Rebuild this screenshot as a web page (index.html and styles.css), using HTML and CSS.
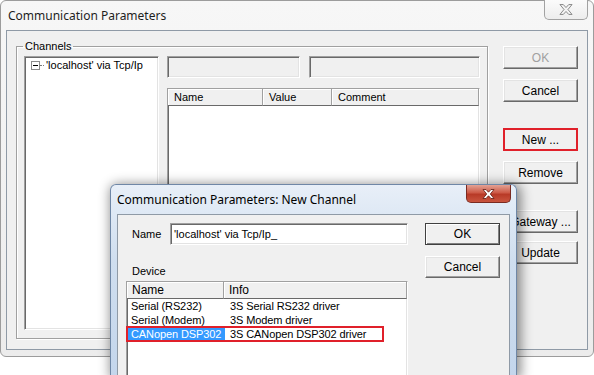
FILE: index.html
```html
<!DOCTYPE html>
<html lang="en">

<head>
    <meta charset="UTF-8">
    <meta name="viewport" content="width=device-width, initial-scale=1.0">
    <title>Communication Parameters</title>
    <link rel="stylesheet" href="styles.css">
</head>

<body>
    <!-- main window -->
    <div class="win main">
        <div class="titlebar">
            <span class="title">Communication Parameters</span>
            <span class="close idle">
                <svg width="14" height="11" viewBox="0 0 12 10">
                    <polygon points="0.5,0.5 3.5,0.5 6,3.2 8.5,0.5 11.5,0.5 7.8,5 11.5,9.5 8.5,9.5 6,6.8 3.5,9.5 0.5,9.5 4.2,5" />
                </svg>
            </span>
        </div>
        <div class="client main_client">
            <fieldset class="group">
                <legend>Channels</legend>
                <div class="tree sunken">
                    <div class="node">
                        <span class="expander"></span>
                        <span class="branch"></span>
                        <span>'localhost' via Tcp/Ip</span>
                    </div>
                </div>
                <div class="props">
                    <div class="edits">
                        <div class="field sunken"></div>
                        <div class="field sunken wide"></div>
                    </div>
                    <div class="list sunken">
                        <div class="lhead">
                            <span class="col_name">Name</span>
                            <span class="col_value">Value</span>
                            <span class="col_comment">Comment</span>
                        </div>
                    </div>
                </div>
            </fieldset>
            <div class="btns">
                <div class="btn disabled">OK</div>
                <div class="btn">Cancel</div>
                <div class="btn far marked">New ...</div>
                <div class="btn">Remove</div>
                <div class="btn far">Gateway ...</div>
                <div class="btn near">Update</div>
            </div>
        </div>
    </div>

    <!-- new channel dialog -->
    <div class="win dlg">
        <div class="titlebar dlg_bar">
            <span class="title">Communication Parameters: New Channel</span>
            <span class="close hot">
                <svg width="15" height="10" viewBox="0 0 12 10">
                    <polygon points="0.5,0.5 3.5,0.5 6,3.2 8.5,0.5 11.5,0.5 7.8,5 11.5,9.5 8.5,9.5 6,6.8 3.5,9.5 0.5,9.5 4.2,5" />
                </svg>
            </span>
        </div>
        <div class="client dlg_client">
            <div class="dlg_left">
                <div class="name_row">
                    <span class="name_label">Name</span>
                    <div class="edit sunken">'localhost' via Tcp/Ip_</div>
                </div>
                <div class="device_label">Device</div>
                <div class="dev_list sunken">
                    <div class="dhead">
                        <span class="dcol_name">Name</span>
                        <span class="dcol_info">Info</span>
                    </div>
                    <div class="drow">
                        <span class="dcell_name">Serial (RS232)</span>
                        <span class="dcell_info">3S Serial RS232 driver</span>
                    </div>
                    <div class="drow">
                        <span class="dcell_name">Serial (Modem)</span>
                        <span class="dcell_info">3S Modem driver</span>
                    </div>
                    <div class="drow picked">
                        <span class="dcell_name">CANopen DSP302</span>
                        <span class="dcell_info">3S CANopen DSP302 driver</span>
                    </div>
                </div>
            </div>
            <div class="dlg_btns">
                <div class="btn default">OK</div>
                <div class="btn">Cancel</div>
            </div>
        </div>
    </div>
</body>

</html>
```

FILE: styles.css
```css
* {
    padding: 0;
    margin: 0;
    box-sizing: border-box;
}

body {
    width: 594px;
    height: 375px;
    overflow: hidden;
    position: relative;
    background: #ffffff;
    font-family: "Liberation Sans", Arial, sans-serif;
    font-size: 11px;
    color: #000000;
}

/* windows sit on the desktop */
.win {
    position: absolute;
}

.main {
    left: 0;
    top: 0;
    width: 594px;
    height: 357px;
    border: 1px solid #9c9c9c;
    border-radius: 6px;
    background: linear-gradient(#f7f7f7, #ececec);
}

.titlebar {
    height: 29px;
    display: flex;
    align-items: center;
}

.title {
    padding-left: 7px;
    font-family: "Noto Sans", sans-serif;
    font-size: 12px;
    color: #1e1e1e;
}

.close {
    margin-left: auto;
    align-self: flex-start;
    display: flex;
    justify-content: center;
    align-items: center;
    border-radius: 0 0 5px 5px;
}

.close.idle {
    width: 44px;
    height: 20px;
    margin-right: 5px;
    margin-top: -1px;
    border: 1px solid #a2a2a2;
    border-top: none;
    background: linear-gradient(#fbfbfb, #ededed);
}

.close.idle polygon {
    fill: #f4f4f4;
    stroke: #7c7c7c;
    stroke-width: 0.8;
}

.client {
    background: #f0f0f0;
    border: 1px solid #8f9aa6;
}

.main_client {
    height: 320px;
    margin: 0 5px;
    display: flex;
    align-items: flex-start;
}

.sunken {
    border: 1px solid;
    border-color: #a0a0a0 #ffffff #ffffff #a0a0a0;
    box-shadow: inset 1px 1px 0 #696969, inset -1px -1px 0 #e3e3e3;
}

.group {
    margin: 9px 0 0 9px;
    padding: 3px 7px 8px 7px;
    width: 472px;
    border: 1px solid #a0a0a0;
    box-shadow: 1px 1px 0 #ffffff, inset 1px 1px 0 #ffffff;
    display: flex;
    gap: 8px;
}

.group>legend {
    padding: 0 2px;
    margin-left: -1px;
    line-height: 13px;
}

.tree {
    width: 135px;
    height: 274px;
    background: #ffffff;
    padding: 1px 0 0 6px;
}

.node {
    display: flex;
    align-items: center;
    height: 14px;
}

.expander {
    width: 9px;
    height: 9px;
    border: 1px solid #8c8c8c;
    position: relative;
    background: #ffffff;
}

.expander::after {
    content: "";
    position: absolute;
    left: 1px;
    top: 3px;
    width: 5px;
    height: 1px;
    background: #000000;
}

.branch {
    width: 4px;
    margin-right: 2px;
    border-top: 1px dotted #7a7a7a;
}

.props {
    width: 313px;
}

.edits {
    display: flex;
    gap: 9px;
}

.field {
    width: 133px;
    height: 22px;
    background: #f0f0f0;
}

.field.wide {
    width: 171px;
}

.list {
    margin-top: 10px;
    height: 242px;
    background: #ffffff;
}

.lhead {
    display: flex;
    height: 17px;
}

.lhead>span {
    display: flex;
    align-items: center;
    padding-left: 6px;
    background: #f0f0f0;
    border-right: 1px solid #a0a0a0;
    border-bottom: 1px solid #696969;
    box-shadow: inset 1px 1px 0 #ffffff;
}

.col_name {
    width: 95px;
}

.col_value {
    width: 69px;
}

.col_comment {
    flex: 1;
}

/* buttons */
.btns {
    margin: 15px 0 0 15px;
    width: 75px;
}

.btn {
    width: 75px;
    height: 23px;
    display: flex;
    justify-content: center;
    align-items: center;
    background: #f0f0f0;
    border: 1px solid;
    border-color: #ffffff #696969 #696969 #ffffff;
    box-shadow: inset -1px -1px 0 #a0a0a0, inset 1px 1px 0 #e3e3e3;
    font-size: 12px;
}

.btn+.btn {
    margin-top: 10px;
}

.btn.far {
    margin-top: 26px;
}

.btn.near {
    margin-top: 8px;
}

.btn.disabled {
    color: #a0a0a0;
}

.btn.marked {
    outline: 2px solid #e0202a;
    outline-offset: -2px;
}

/* dialog */
.dlg {
    left: 110px;
    top: 184px;
    width: 407px;
    height: 191px;
    border: 1px solid #6f87a6;
    border-bottom: none;
    border-radius: 6px 6px 0 0;
    background: linear-gradient(#e8eff8, #cfdeef 40%, #c4d6ec);
    box-shadow: 2px 2px 12px 2px rgba(0, 0, 0, 0.45);
}

.dlg_bar .title {
    padding-left: 6px;
    color: #000000;
}

.close.hot {
    width: 45px;
    height: 18px;
    margin-right: 5px;
    border: 1px solid #7a2b22;
    border-top: none;
    background: linear-gradient(#e3a294, #cd5a47 45%, #b83a27 55%, #c9553f);
}

.close.hot polygon {
    fill: #ffffff;
    stroke: #5f1b12;
    stroke-width: 0.8;
}

.dlg_client {
    margin: 0 6px;
    height: 162px;
    border-bottom: none;
    padding: 8px 0 0 8px;
    display: flex;
    align-items: flex-start;
}

.dlg_left {
    width: 282px;
}

.name_row {
    display: flex;
    align-items: center;
    padding-left: 6px;
}

.name_label {
    width: 38px;
}

.edit {
    width: 238px;
    height: 22px;
    background: #ffffff;
    padding: 0 3px;
    display: flex;
    align-items: center;
    white-space: nowrap;
}

.device_label {
    margin-top: 19px;
    padding-left: 6px;
    line-height: 14px;
}

.dev_list {
    margin-top: 3px;
    height: 130px;
    background: #ffffff;
}

.dhead {
    display: flex;
    height: 17px;
}

.dhead>span {
    display: flex;
    align-items: center;
    padding-left: 5px;
    background: #f0f0f0;
    border-right: 1px solid #a0a0a0;
    border-bottom: 1px solid #696969;
    box-shadow: inset 1px 1px 0 #ffffff;
    font-size: 12px;
}

.dcol_name {
    width: 97px;
}

.dcol_info {
    flex: 1;
}

.drow {
    display: flex;
    width: 256px;
    height: 14px;
    align-items: center;
    white-space: nowrap;
    letter-spacing: -0.1px;
}

.dcell_name {
    width: 97px;
    height: 14px;
    margin-left: 1px;
    padding-left: 3px;
    display: flex;
    align-items: center;
}

.dcell_info {
    padding-left: 5px;
}

.drow.picked {
    outline: 2px solid #e0202a;
    outline-offset: -1px;
}

.drow.picked .dcell_name {
    background: #3399ff;
    color: #ffffff;
}

.dlg_btns {
    margin-left: 17px;
}

.dlg_btns .btn {
    height: 22px;
}

.dlg_btns .btn+.btn {
    margin-top: 11px;
}

.btn.default {
    border-color: #404040;
    box-shadow: inset 1px 1px 0 #ffffff, inset -1px -1px 0 #808080;
}
```
